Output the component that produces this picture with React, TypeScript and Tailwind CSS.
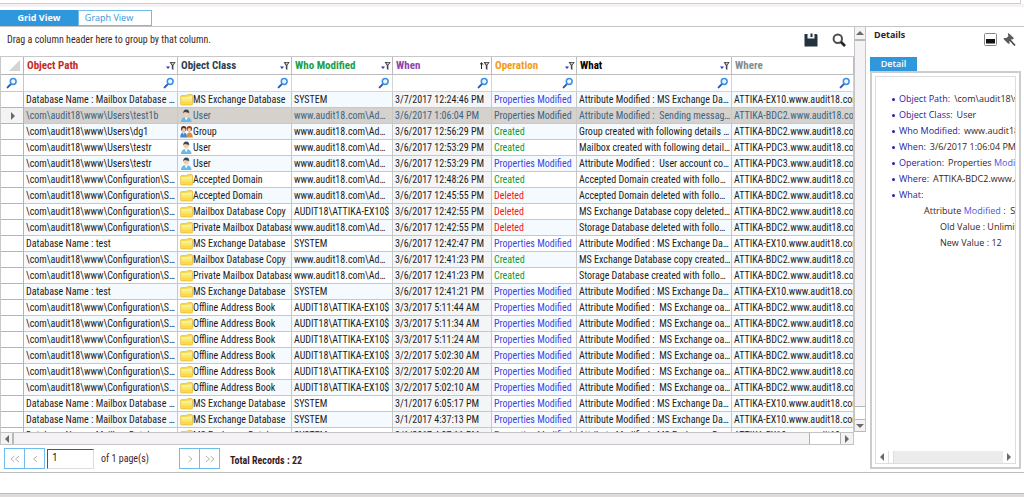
import React from 'react';

type Kind = 'folder' | 'user' | 'group';
type Op = 'Created' | 'Deleted' | 'Properties Modified';
type Row = { path: string; kind: Kind; cls: string; who: string; when: string; op: Op; what: string; where: string };

const CONF = '\\com\\audit18\\www\\Configuration\\Ser...';
const MBX = 'Database Name : Mailbox Database 1...';
const ADMIN = 'www.audit18.com\\Admi...';
const EXS = 'AUDIT18\\ATTIKA-EX10$';
const BDC = 'ATTIKA-BDC2.www.audit18.com';
const PDC = 'ATTIKA-PDC3.www.audit18.com';
const EX = 'ATTIKA-EX10.www.audit18.com';
const PM: Op = 'Properties Modified';
const ATTR_DB = 'Attribute Modified : MS Exchange Data...';
const ATTR_OAB = 'Attribute Modified :  MS Exchange oab...';

const row = (path: string, kind: Kind, cls: string, who: string, when: string, op: Op, what: string, where: string): Row => ({ path, kind, cls, who, when, op, what, where });
const oab = (when: string) => row(CONF, 'folder', 'Offline Address Book', EXS, when, PM, ATTR_OAB, BDC);
const db = (path: string, when: string) => row(path, 'folder', 'MS Exchange Database', 'SYSTEM', when, PM, ATTR_DB, EX);

const rows: Row[] = [
  db(MBX, '3/7/2017 12:24:46 PM'),
  row('\\com\\audit18\\www\\Users\\test1b', 'user', 'User', ADMIN, '3/6/2017 1:06:04 PM', PM, 'Attribute Modified :  Sending message ...', BDC),
  row('\\com\\audit18\\www\\Users\\dg1', 'group', 'Group', ADMIN, '3/6/2017 12:56:29 PM', 'Created', 'Group created with following details :   ...', BDC),
  row('\\com\\audit18\\www\\Users\\testr', 'user', 'User', ADMIN, '3/6/2017 12:53:29 PM', 'Created', 'Mailbox created with following details : ...', PDC),
  row('\\com\\audit18\\www\\Users\\testr', 'user', 'User', ADMIN, '3/6/2017 12:53:29 PM', PM, 'Attribute Modified :  User account cont...', PDC),
  row(CONF, 'folder', 'Accepted Domain', ADMIN, '3/6/2017 12:48:26 PM', 'Created', 'Accepted Domain created with followin...', BDC),
  row(CONF, 'folder', 'Accepted Domain', ADMIN, '3/6/2017 12:45:55 PM', 'Deleted', 'Accepted Domain deleted with followin...', BDC),
  row(CONF, 'folder', 'Mailbox Database Copy', EXS, '3/6/2017 12:42:55 PM', 'Deleted', 'MS Exchange Database copy deleted ...', BDC),
  row(CONF, 'folder', 'Private Mailbox Database', ADMIN, '3/6/2017 12:42:55 PM', 'Deleted', 'Storage Database deleted with followin...', BDC),
  db('Database Name : test', '3/6/2017 12:42:47 PM'),
  row(CONF, 'folder', 'Mailbox Database Copy', ADMIN, '3/6/2017 12:41:23 PM', 'Created', 'MS Exchange Database copy created ...', BDC),
  row(CONF, 'folder', 'Private Mailbox Database', ADMIN, '3/6/2017 12:41:23 PM', 'Created', 'Storage Database created with followin...', BDC),
  db('Database Name : test', '3/6/2017 12:41:21 PM'),
  oab('3/3/2017 5:11:44 AM'),
  oab('3/3/2017 5:11:34 AM'),
  oab('3/3/2017 5:11:24 AM'),
  oab('3/2/2017 5:02:30 AM'),
  oab('3/2/2017 5:02:20 AM'),
  oab('3/2/2017 5:02:10 AM'),
  db(MBX, '3/1/2017 6:05:17 PM'),
  db(MBX, '3/1/2017 4:37:13 PM'),
  db(MBX, '3/1/2017 4:37:11 PM'),
];

const opColor: Record<Op, string> = {
  Created: 'text-[#0a9a33]',
  Deleted: 'text-[#f51414]',
  'Properties Modified': 'text-[#3b46e0]',
};

const columns = [
  { name: 'Object Path', color: 'text-[#c8281e]', width: 'w-[154px]' },
  { name: 'Object Class', color: 'text-[#2c3e50]', width: 'w-[114px]' },
  { name: 'Who Modified', color: 'text-[#1a9e4b]', width: 'w-[101px]' },
  { name: 'When', color: 'text-[#8e44ad]', width: 'w-[99px]' },
  { name: 'Operation', color: 'text-[#f39c12]', width: 'w-[85px]' },
  { name: 'What', color: 'text-black', width: 'w-[155px]' },
  { name: 'Where', color: 'text-[#7f8c8d]', width: '' },
];

const Magnifier = () => (
  <svg viewBox="0 0 12 12" className="block size-3 shrink-0" aria-hidden="true">
    <path d="M1.600 10.400 4.600 7.400" stroke="#2f55c0" strokeWidth="2" strokeLinecap="round" />
    <circle cx="7.200" cy="4.500" r="2.900" fill="#eaf6ff" stroke="#3a8fe4" strokeWidth="1.500" />
  </svg>
);

const Filter = ({ up }: { up?: boolean }) => (
  <svg viewBox="0 0 10 10" className="block size-2.5 shrink-0" aria-hidden="true">
    {up ? (
      <path d="M1.500 8V2M0 3.600 1.500 1.600 3 3.600" fill="none" stroke="#222" strokeWidth="1" />
    ) : (
      <path d="M0 5.500h4L2 8z" fill="#3a2fc0" />
    )}
    <path d="M3.500 1h6.200L7.400 4.600V9L5.800 8V4.600z" fill="#444" />
    <path d="M5.200 1.800h3L6.800 4z" fill="#ccc" />
  </svg>
);

const Folder = () => (
  <svg viewBox="0 0 13 13" className="block size-[13px] shrink-0" aria-hidden="true">
    <path d="M.7 3.200 1.200 2.600h5.300l1-1h4.400l.6.600v9.200l-.6.500H1.200l-.5-.5z" fill="#fbdc48" stroke="#e3b82c" strokeWidth=".7" />
    <path d="M1.200 4.200h6.600l1-1h3.200v3.300H1.200z" fill="#fff09a" />
    <path d="M1.200 6.500H12v2H1.200z" fill="#fde770" />
  </svg>
);

const User = () => (
  <svg viewBox="0 0 13 13" className="block size-[13px] shrink-0" aria-hidden="true">
    <path d="M1 13c0-3 2-5 5-5s5.500 2 5.500 5z" fill="#63b9e8" />
    <path d="M4.500 8.300 6.200 11.500 8 8.300z" fill="#fff" />
    <circle cx="6.200" cy="4.800" r="2.700" fill="#f5cfa8" />
    <path d="M3.300 4.600C3 1.500 4.500.4 6.300.4s3.300 1.200 2.900 4.200C8.500 3 6 3.400 4.700 2.900z" fill="#37465a" />
  </svg>
);

const Group = () => (
  <svg viewBox="0 0 13 13" className="block size-[13px] shrink-0" aria-hidden="true">
    <circle cx="9.400" cy="3.800" r="2.700" fill="#a5411d" />
    <circle cx="9.300" cy="4.800" r="1.700" fill="#f7cfa8" />
    <path d="M6.500 12.500c0-3.500 1-5 3-5s3.300 1.500 3.300 5z" fill="#e58a38" />
    <circle cx="3.700" cy="3.800" r="2.700" fill="#56341d" />
    <circle cx="3.800" cy="4.800" r="1.800" fill="#f7cfa8" />
    <path d="M.2 12.500c0-3.500 1.200-5 3.500-5s3.300 1.500 3.300 5z" fill="#4b86c9" />
    <path d="M3 7.500h1.500l-.7 2.500z" fill="#fff" />
  </svg>
);

const kindIcon: Record<Kind, React.ReactElement> = { folder: <Folder />, user: <User />, group: <Group /> };

const Arrow = ({ dir }: { dir: 'left' | 'right' | 'up' | 'down' }) => {
  const d = {
    left: 'M6 0v8L2 4z',
    right: 'M2 0v8l4-4z',
    up: 'M0 6h8L4 2z',
    down: 'M0 2h8L4 6z',
  }[dir];
  return (
    <svg viewBox="0 0 8 8" className="block size-2" aria-hidden="true">
      <path d={d} fill="#6a6a6a" />
    </svg>
  );
};

const PageButton = ({ label, double, back }: { label: string; double?: boolean; back?: boolean }) => (
  <button type="button" aria-label={label} className="-ml-px flex h-[21px] w-[21px] items-center justify-center border border-[#6fbdec] bg-white">
    <svg viewBox="0 0 10 8" className="h-2 w-2.5" fill="none" stroke="#b4b4b4" aria-hidden="true">
      {double ? (
        <path d={back ? 'M4.500 1 1 4l3.500 3M9 1 5.500 4 9 7' : 'M1 1l3.500 3L1 7M5.500 1 9 4 5.500 7'} />
      ) : (
        <path d={back ? 'M7 1 3.500 4 7 7' : 'M3.500 1 7 4 3.500 7'} />
      )}
    </svg>
  </button>
);

const Detail = ({ name, children }: { name: string; children?: React.ReactNode }) => (
  <li className="flex h-4 items-center gap-1 whitespace-pre">
    <span className="size-[3px] shrink-0 rounded-full bg-[#2020a8]" />
    <span className="text-[#1c1ca0]">{name}:</span>
    <span className="text-[#3a1c20]">{children}</span>
  </li>
);

const GRID_FONT = "font-['Roboto_Condensed',Roboto,sans-serif]";
const UI_FONT = "font-['Open_Sans',sans-serif]";

export default function App() {
  return (
    <div className={`flex h-screen flex-col overflow-hidden bg-white text-[10px] ${GRID_FONT}`}>
      <div className="mr-[3px] h-1 shrink-0 border-b border-r border-[#cfcfcf]" />
      <div className="h-[3px] shrink-0 bg-[#f6f2f4]" />

      <nav className={`mt-[3px] flex h-[17px] shrink-0 border-b border-[#c4c4c4] text-[9px] ${UI_FONT}`}>
        <button type="button" className="h-4 w-[78px] bg-[#2f97dc] font-bold text-white">Grid View</button>
        <button type="button" className="h-4 w-[74px] border border-[#6fbdec] bg-white pr-3 text-[#2f97dc]">Graph View</button>
      </nav>

      <div className="flex min-h-0 flex-1">
        <main className="flex min-w-0 flex-1 flex-col">
          <div className="flex min-h-0 flex-1">
            <section className="flex min-w-0 flex-1 flex-col">
              <header className="flex h-[29px] shrink-0 items-center pb-1 pl-[7px] pr-2">
                <p className="flex-1 text-[#3f1f24]">Drag a column header here to group by that column.</p>
                <button type="button" aria-label="Save" className="mr-3.5">
                  <svg viewBox="0 0 14 14" className="block size-3.5" aria-hidden="true">
                    <path d="M.5 1h12l1 1v11.500H.5z" fill="#22333f" />
                    <path d="M3.500.500h7v5h-7z" fill="#f4f6f7" />
                    <path d="M6.500.500h2v3.500h-2z" fill="#22333f" />
                  </svg>
                </button>
                <button type="button" aria-label="Search">
                  <svg viewBox="0 0 14 14" className="block size-3.5" fill="none" aria-hidden="true">
                    <circle cx="5.800" cy="5.800" r="4.200" stroke="#4c4c4c" strokeWidth="2" />
                    <path d="m9 9 4 4" stroke="#222" strokeWidth="2.600" />
                  </svg>
                </button>
              </header>

              <div className="min-h-0 flex-1 overflow-hidden border-t border-[#c8c8c8]">
                <table className="w-full table-fixed border-separate border-spacing-0 border-l border-[#c8c8c8]">
                  <thead>
                    <tr className="h-[18px] text-[11px]">
                      <th className="w-[23px] border-b border-r border-[#b4b4b4] p-0 pl-2">
                        <svg viewBox="0 0 11 11" className="block size-[11px]" aria-hidden="true"><path d="M11 0v11H0z" fill="#d4d4d4" /></svg>
                      </th>
                      {columns.map((c) => (
                        <th key={c.name} className={`${c.width} border-b border-r border-[#bcbcbc] p-0 pl-[3px] text-left font-bold ${c.color}`}>
                          <div className="flex h-[17px] items-center justify-between pr-px leading-4">
                            {c.name}
                            {c.name !== 'Where' && <Filter up={c.name === 'When'} />}
                          </div>
                        </th>
                      ))}
                    </tr>
                    <tr className="h-[17px]">
                      <td className="border-b border-r border-[#c8c8c8] p-0 pl-[5px]"><Magnifier /></td>
                      {columns.map((c) => (
                        <td key={c.name} className="border-b border-r border-[#d4d4d4] p-0">
                          <div className="flex h-4 items-center pr-0.5">
                            <input type="text" aria-label={`Filter ${c.name}`} className="h-3 w-0 min-w-0 flex-1 bg-transparent outline-none" />
                            <Magnifier />
                          </div>
                        </td>
                      ))}
                    </tr>
                  </thead>
                  <tbody>
                    {rows.map((r, i) => {
                      const sel = i === 1;
                      const cell = 'h-4 overflow-hidden whitespace-pre border-b border-r border-[#c8c8c8] p-0 pl-0.5 leading-[15px]';
                      const tone = sel ? 'bg-[#d5d1cc] text-[#3c6484]' : i % 2 === 0 ? 'bg-[#f5faff] text-[#1c1c1c]' : 'bg-white text-[#1c1c1c]';
                      return (
                        <tr key={i} className={tone}>
                          <td className={`h-4 border-b border-r border-[#b4b4b4] p-0 pl-2 ${sel ? 'bg-[#f4f4f4]' : 'bg-white'}`}>{sel && <Arrow dir="right" />}</td>
                          <td className={`${cell} text-ellipsis`}>{r.path}</td>
                          <td className={cell}>
                            <div className="flex h-[15px] items-center">{kindIcon[r.kind]}{r.cls}</div>
                          </td>
                          <td className={`${cell} text-ellipsis`}>{r.who}</td>
                          <td className={`${cell} ${sel ? '' : 'bg-[#f4f5f6]'}`}>{r.when}</td>
                          <td className={`${cell} ${sel ? '' : opColor[r.op]}`}>{r.op}</td>
                          <td className={`${cell} text-ellipsis`}>{r.what}</td>
                          <td className={cell}>{r.where}</td>
                        </tr>
                      );
                    })}
                  </tbody>
                </table>
              </div>
            </section>

            <div className="flex w-3 shrink-0 flex-col border-x border-[#c4c4c4] bg-[#f5f2f5]">
              <button type="button" aria-label="Scroll up" className="flex h-3.5 items-center justify-center border-b-2 border-[#b8b8b8]"><Arrow dir="up" /></button>
              <div className="flex-1" />
              <div className="h-3.5 border-y border-[#b8b8b8] bg-white" />
              <button type="button" aria-label="Scroll down" className="flex h-3 items-center justify-center border-b border-[#b8b8b8]"><Arrow dir="down" /></button>
            </div>
          </div>

          <div className="mr-3 flex h-[13px] shrink-0 border border-[#c4c4c4] bg-[#f5f2f5]">
            <button type="button" aria-label="Scroll left" className="flex w-[13px] items-center justify-center border-r-2 border-[#b8b8b8]"><Arrow dir="left" /></button>
            <div className="flex-1" />
            <div className="w-8 border-x border-[#b0b0b0] bg-white" />
            <button type="button" aria-label="Scroll right" className="flex w-3 items-center justify-center"><Arrow dir="right" /></button>
          </div>

          <footer className="flex h-[27px] shrink-0 items-center pl-[5px]">
            <PageButton label="First page" double back />
            <PageButton label="Previous page" back />
            <input type="text" aria-label="Page" defaultValue="1" className={`ml-0.5 h-5 w-[47px] border border-b-[#ddd] border-l-[#555] border-r-[#ddd] border-t-[#555] bg-white px-1 pb-1 ${UI_FONT}`} />
            <span className="ml-[7px] w-[79px] text-[#4a2228]">of 1 page(s)</span>
            <PageButton label="Next page" />
            <PageButton label="Last page" double />
            <span className="ml-2.5 pt-1 font-bold text-[#3a1a24]">Total Records : 22</span>
          </footer>
        </main>

        <aside className={`ml-1 flex w-[154px] shrink-0 flex-col pb-[3px] text-[9px] ${UI_FONT}`}>
          <header className="flex h-[30px] shrink-0 items-center pb-1.5 pl-1 pr-2">
            <h2 className="flex-1 pb-2 font-bold text-[#3a1a24]">Details</h2>
            <button type="button" aria-label="Minimize" className="mr-1.5">
              <svg viewBox="0 0 13 13" className="block size-[13px]" aria-hidden="true">
                <rect x=".5" y=".5" width="12" height="12" rx="1" fill="#fff" stroke="#888" />
                <path d="M2 6h9v4.500H2z" fill="#111" />
              </svg>
            </button>
            <button type="button" aria-label="Pin">
              <svg viewBox="0 0 13 13" className="block size-[13px]" aria-hidden="true">
                <path d="M5.500 0 11 5.200 9.500 6.500 8.500 6.300 6.500 8.300V11L5 10.500.5 6 1 5h2.500L5.500 3 4.800 1.500z" fill="#5a5a5a" />
                <path d="m7 7 5 5.500" stroke="#444" strokeWidth="1.600" />
              </svg>
            </button>
          </header>
          <button type="button" className="h-3.5 w-[47px] shrink-0 bg-[#2f97dc] font-semibold leading-[14px] text-white">Detail</button>
          <div className="mr-[3px] flex min-h-0 flex-1 flex-col border-2 border-[#cccccc] p-[3px]">
            <div className="flex min-h-0 flex-1 flex-col border border-[#dddddd]">
              <ul className="min-h-0 flex-1 overflow-hidden pl-4 pt-3.5">
                <Detail name="Object Path">\com\audit18\www\Users\test1b</Detail>
                <Detail name="Object Class">User</Detail>
                <Detail name="Who Modified">www.audit18.com</Detail>
                <Detail name="When">3/6/2017 1:06:04 PM</Detail>
                <Detail name="Operation">Properties <span className="text-[#4b56e0]">Modified</span></Detail>
                <Detail name="Where">ATTIKA-BDC2.www.audit18.com</Detail>
                <Detail name="What" />
                <li className="h-4 whitespace-pre pl-8 leading-4 text-[#3a1c20]">Attribute <span className="text-[#4b56e0]">Modified</span> :  Sending</li>
                <li className="h-4 whitespace-nowrap pl-12 leading-4 text-[#3a1c20]">Old Value : Unlimited</li>
                <li className="h-4 whitespace-nowrap pl-12 leading-4 text-[#3a1c20]">New Value : 12</li>
              </ul>
              <div className="flex h-3 shrink-0 bg-[#ececec]">
                <button type="button" aria-label="Scroll details left" className="flex w-3 items-center justify-center bg-white"><Arrow dir="left" /></button>
                <div className="w-1.5 border-x border-[#ddd] bg-white" />
                <div className="flex-1" />
                <button type="button" aria-label="Scroll details right" className="flex w-3 items-center justify-center bg-white"><Arrow dir="right" /></button>
              </div>
            </div>
          </div>
        </aside>
      </div>

      <div className="h-[22px] shrink-0 border-y border-[#bcbcbc]" />
      <div className="h-[3px] shrink-0 bg-[#dedbd8]" />
    </div>
  );
}
